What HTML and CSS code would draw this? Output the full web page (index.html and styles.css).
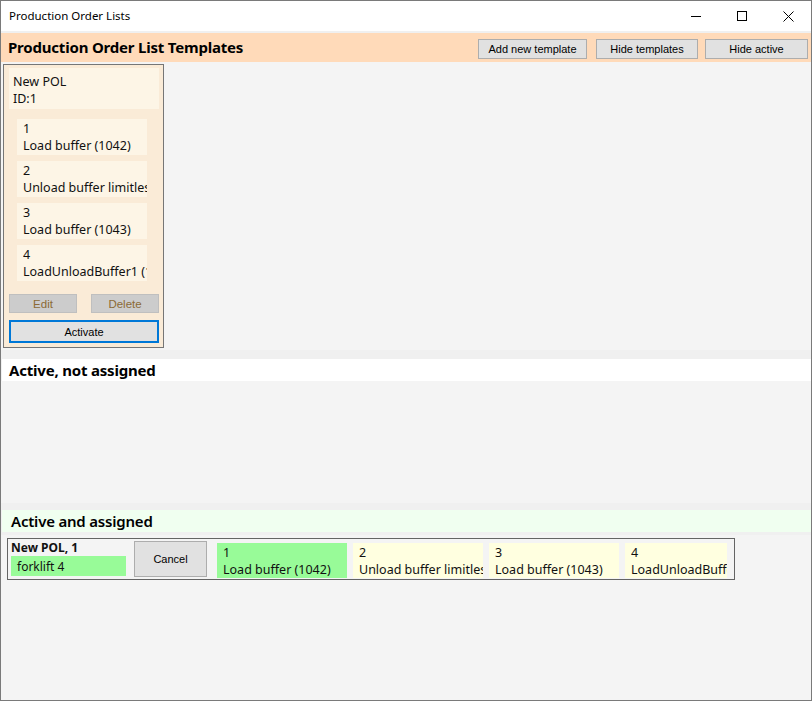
FILE: index.html
```html
<!DOCTYPE html>
<html>
<head>
<meta charset="utf-8">
<link rel="stylesheet" href="styles.css">
</head>
<body>
<div class="window">
  <div class="titlebar">
    <div class="title">Production Order Lists</div>
    <div class="controls">
      <div class="ctl"><svg width="10" height="10" viewBox="0 0 10 10"><path d="M0 5.5H10" stroke="#000" stroke-width="1"/></svg></div>
      <div class="ctl"><svg width="10" height="10" viewBox="0 0 10 10"><rect x="0.5" y="0.5" width="9" height="9" fill="none" stroke="#000" stroke-width="1"/></svg></div>
      <div class="ctl"><svg width="11" height="11" viewBox="0 0 11 11"><path d="M0.5 0.5L10.5 10.5M10.5 0.5L0.5 10.5" stroke="#000" stroke-width="1"/></svg></div>
    </div>
  </div>
  <div class="strip2"></div>
  <div class="tpl-header">
    <div class="h-title">Production Order List Templates</div>
    <div class="h-buttons">
      <button class="btn b-add">Add new template</button>
      <button class="btn b-hidet">Hide templates</button>
      <button class="btn b-hidea">Hide active</button>
    </div>
  </div>
  <div class="tpl-area">
    <div class="card">
      <div class="card-head">
        <div class="line">New POL</div>
        <div class="line">ID:1</div>
      </div>
      <div class="items">
        <div class="item"><div class="line">1</div><div class="line">Load buffer (1042)</div></div>
        <div class="item"><div class="line">2</div><div class="line">Unload buffer limitless</div></div>
        <div class="item"><div class="line">3</div><div class="line">Load buffer (1043)</div></div>
        <div class="item"><div class="line">4</div><div class="line">LoadUnloadBuffer1 (1044)</div></div>
      </div>
      <div class="card-btns">
        <button class="btn dis">Edit</button>
        <button class="btn dis">Delete</button>
      </div>
      <button class="btn activate">Activate</button>
    </div>
  </div>
  <div class="gap g1"></div>
  <div class="band white">Active, not assigned</div>
  <div class="area2"></div>
  <div class="gap g2"></div>
  <div class="band green">Active and assigned</div>
  <div class="gap g3"></div>
  <div class="area3">
    <div class="assigned">
      <div class="who">
        <div class="who-name">New POL, 1</div>
        <div class="forklift">forklift 4</div>
      </div>
      <button class="btn cancel">Cancel</button>
      <div class="steps">
        <div class="step done"><div class="line">1</div><div class="line">Load buffer (1042)</div></div>
        <div class="step"><div class="line">2</div><div class="line">Unload buffer limitless</div></div>
        <div class="step"><div class="line">3</div><div class="line">Load buffer (1043)</div></div>
        <div class="step last"><div class="line">4</div><div class="line">LoadUnloadBuffer1 (1044)</div></div>
      </div>
    </div>
  </div>
</div>
</body>
</html>
```

FILE: styles.css
```css
* { box-sizing: border-box; }
html, body { margin: 0; padding: 0; background: #ffffff; }
body { font-family: "Noto Sans", "Open Sans", sans-serif; color: #000; }

.window {
  width: 812px;
  height: 701px;
  border: 1px solid #7a7a7a;
  background: #f0f0f0;
  overflow: hidden;
  display: flex;
  flex-direction: column;
}

.titlebar {
  height: 30px;
  flex: none;
  background: #ffffff;
  display: flex;
  align-items: center;
  justify-content: space-between;
}
.title {
  padding-left: 8px;
  font-size: 11.5px;
  padding-bottom: 1px;
}
.controls { display: flex; height: 30px; }
.ctl {
  width: 46px;
  height: 30px;
  display: flex;
  align-items: center;
  justify-content: center;
}

.strip2 { height: 2px; flex: none; background: #f0f0f0; }

.tpl-header {
  height: 29px;
  flex: none;
  background: #ffdab9;
  display: flex;
  align-items: center;
  justify-content: space-between;
  padding: 0 3px 0 7px;
}
.h-title {
  font-size: 15px;
  font-weight: 700;
  letter-spacing: -0.2px;
  padding-bottom: 2px;
}
.h-buttons { display: flex; align-items: center; padding-top: 2px; }

.btn {
  font-family: "Liberation Sans", Arial, sans-serif;
  font-size: 11px;
  color: #000;
  background: #e1e1e1;
  border: 1px solid #adadad;
  padding: 0;
  margin: 0;
  height: 20px;
}
.b-add { width: 109px; margin-right: 9px; }
.b-hidet { width: 102px; margin-right: 7px; }
.b-hidea { width: 103px; }

.tpl-area {
  height: 288px;
  flex: none;
  background: #f4f4f4;
  padding: 2px 0 0 2px;
}

.card {
  width: 161px;
  height: 284px;
  border: 1px solid #767676;
  background: #faebd7;
  padding: 3px 0 0 5px;
  font-size: 12.5px;
  color: #111;
}
.line {
  line-height: 17px;
  height: 17px;
  white-space: nowrap;
  overflow: hidden;
}
.card-head {
  width: 150px;
  height: 41px;
  background: #fdf5e6;
  padding: 5px 0 0 4px;
}
.items {
  margin: 10px 0 0 8px;
  display: flex;
  flex-direction: column;
  gap: 6px;
}
.item {
  width: 130px;
  height: 36px;
  background: #fdf5e6;
  padding: 1px 0 0 6px;
  overflow: hidden;
}
.card-btns {
  display: flex;
  justify-content: space-between;
  width: 150px;
  margin-top: 13px;
}
.btn.dis {
  width: 68px;
  height: 19px;
  background: #cccccc;
  border-color: #bfbfbf;
  color: #8b6a35;
  font-size: 11.5px;
}
.btn.activate {
  display: block;
  width: 150px;
  height: 23px;
  margin-top: 7px;
  border: 2px solid #0078d7;
  background: #e1e1e1;
}

.gap { flex: none; background: #f0f0f0; }
.g1 { height: 9px; }
.g2 { height: 7px; }
.g3 { height: 3px; }

.band {
  height: 22px;
  flex: none;
  font-size: 15px;
  font-weight: 700;
  line-height: 22px;
  letter-spacing: -0.2px;
  margin-left: 1px;
}
.band.white { background: #ffffff; padding-left: 7px; }
.band.green { background: #f0fff0; padding-left: 9px; font-weight: 600; }

.area2 { height: 122px; flex: none; background: #f4f4f4; }
.area3 { flex: 1; background: #f4f4f4; padding: 3px 0 0 6px; }

.assigned {
  width: 728px;
  height: 42px;
  border: 1px solid #646464;
  display: flex;
  align-items: flex-start;
  font-size: 12.5px;
  color: #111;
}
.who { width: 122px; padding: 1px 0 0 3px; }
.who-name {
  font-weight: 700;
  font-size: 12px;
  line-height: 15px;
  height: 16px;
}
.forklift {
  width: 115px;
  height: 20px;
  background: #98fb98;
  font-size: 12px;
  line-height: 20px;
  padding: 1px 0 0 6px;
}
.btn.cancel {
  width: 73px;
  height: 36px;
  margin: 2px 0 0 4px;
}
.steps {
  display: flex;
  gap: 6px;
  margin: 4px 0 0 10px;
}
.step {
  width: 130px;
  height: 35px;
  background: #ffffe0;
  padding: 1px 0 0 6px;
  overflow: hidden;
}
.step.done { background: #98fb98; }
.step.last { width: 102px; }
```
